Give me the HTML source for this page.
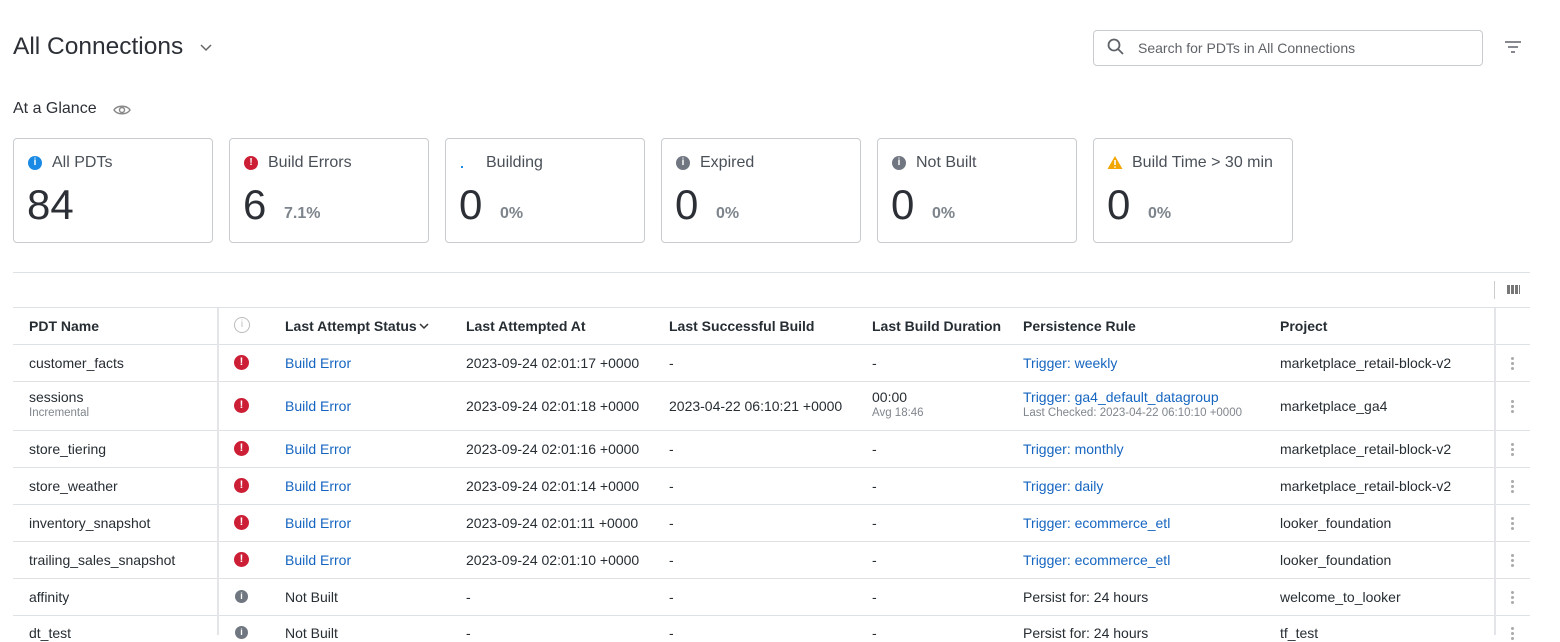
<!DOCTYPE html>
<html><head><style>
body{margin:0;width:1560px;height:635px;overflow:hidden;background:#fff;font-family:"Liberation Sans",Arial,sans-serif;color:#262d33;position:relative}
.a{position:absolute}
.card{position:absolute;top:138px;width:198px;height:103px;border:1px solid #c8ccd0;border-radius:4px}
.card .t{position:absolute;left:38px;top:15px;font-size:16px;color:#4a5058}
.card .ic{position:absolute;left:14px;top:17px;width:14px;height:14px;border-radius:50%;color:#fff;font-size:10px;font-weight:bold;text-align:center;line-height:14px}
.card .n{position:absolute;left:13px;top:42px;font-size:42px;color:#2c3036}
.card .p{position:absolute;left:54px;top:66px;font-size:16px;font-weight:bold;color:#7d848c}
.hl{position:absolute;left:13px;width:1517px;height:1px;background:#dfe2e5}
.c{position:absolute;font-size:14px;white-space:nowrap}
.h{font-weight:bold;color:#262d33}
.lk{color:#1565c0}
.sub{font-size:11.5px;color:#80868d}
.err{position:absolute;left:234px;width:15px;height:15px;border-radius:50%;background:#cc1f36;color:#fff;font-size:11px;font-weight:bold;text-align:center;line-height:15px}
.gi{position:absolute;left:235px;width:13px;height:13px;border-radius:50%;background:#707780;color:#fff;font-size:9px;font-weight:bold;text-align:center;line-height:13px}
.dots{position:absolute;left:1511px;width:3px;font-size:0}
.dots i{display:block;width:3px;height:3px;border-radius:50%;background:#aaa;margin-bottom:2px}
</style></head><body>
<div class="a" style="left:13px;top:33px;font-size:24.5px;color:#2c3036">All Connections</div>
<svg class="a" style="left:200px;top:44px" width="12" height="8"><path d="M1 1l5 5 5-5" stroke="#666" stroke-width="1.5" fill="none"/></svg>
<div class="a" style="left:1093px;top:30px;width:388px;height:34px;border:1px solid #c8ccd0;border-radius:4px"></div>
<svg class="a" style="left:1107px;top:38px" width="18" height="18"><circle cx="7" cy="7" r="5.5" stroke="#5f6368" stroke-width="1.8" fill="none"/><path d="M11 11l5 5" stroke="#5f6368" stroke-width="1.8"/></svg>
<div class="a" style="left:1138px;top:40px;font-size:14px;color:#5f6368">Search for PDTs in All Connections</div>
<svg class="a" style="left:1505px;top:41px" width="16" height="12"><path d="M0 1h16M3 6h10M6 11h4" stroke="#5f6368" stroke-width="1.6"/></svg>
<div class="a" style="left:13px;top:100px;font-size:16px;color:#2c3036">At a Glance</div>
<svg class="a" style="left:113px;top:103px" width="18" height="14"><path d="M1 7C4 2 14 2 17 7 14 12 4 12 1 7z" stroke="#888" stroke-width="1.4" fill="none"/><circle cx="9" cy="7" r="2.5" stroke="#888" stroke-width="1.4" fill="none"/></svg>

<div class="card" style="left:13px"><div class="ic" style="background:#1a8ae5">i</div><div class="t">All PDTs</div><div class="n">84</div></div>
<div class="card" style="left:229px"><div class="ic" style="background:#cc1f36">!</div><div class="t">Build Errors</div><div class="n">6</div><div class="p">7.1%</div></div>
<div class="card" style="left:445px"><div class="a" style="left:15px;top:27px;width:2px;height:2px;background:#1a8ae5"></div><div class="t" style="left:40px">Building</div><div class="n">0</div><div class="p">0%</div></div>
<div class="card" style="left:661px"><div class="ic" style="background:#707780">i</div><div class="t">Expired</div><div class="n">0</div><div class="p">0%</div></div>
<div class="card" style="left:877px"><div class="ic" style="background:#707780">i</div><div class="t">Not Built</div><div class="n">0</div><div class="p">0%</div></div>
<div class="card" style="left:1093px"><svg class="a" style="left:13px;top:16px" width="16" height="15"><path d="M8 1L15.5 14H.5z" fill="#f2a600"/><path d="M8 5v5M8 11.5v1.2" stroke="#fff" stroke-width="1.6"/></svg><div class="t">Build Time &gt; 30 min</div><div class="n">0</div><div class="p">0%</div></div>

<div class="hl" style="top:272px"></div>
<div class="a" style="left:1494px;top:281px;width:1px;height:18px;background:#ccc"></div>
<div class="a" style="left:1507px;top:285px;width:13px;height:9px;background:repeating-linear-gradient(90deg,#777 0 3px,#fff 3px 4px)"></div>
<div class="hl" style="top:307px"></div>
<div class="hl" style="top:344px"></div>
<div class="hl" style="top:381px"></div>
<div class="hl" style="top:430px"></div>
<div class="hl" style="top:467px"></div>
<div class="hl" style="top:504px"></div>
<div class="hl" style="top:541px"></div>
<div class="hl" style="top:578px"></div>
<div class="hl" style="top:615px"></div>
<div class="a" style="left:217px;top:308px;width:2px;height:327px;background:#e3e5e8"></div>
<div class="a" style="left:1494px;top:308px;width:2px;height:327px;background:#e3e5e8"></div>

<div class="c h" style="left:29px;top:318px">PDT Name</div>
<div class="a" style="left:234px;top:317px;width:14px;height:14px;border:1px solid #bbb;border-radius:50%;color:#bbb;font-size:10px;text-align:center;line-height:14px">i</div>
<div class="c h" style="left:285px;top:318px">Last Attempt Status</div>
<svg class="a" style="left:419px;top:323px" width="10" height="7"><path d="M1 1l4 4 4-4" stroke="#333" stroke-width="1.5" fill="none"/></svg>
<div class="c h" style="left:466px;top:318px">Last Attempted At</div>
<div class="c h" style="left:669px;top:318px">Last Successful Build</div>
<div class="c h" style="left:872px;top:318px">Last Build Duration</div>
<div class="c h" style="left:1023px;top:318px">Persistence Rule</div>
<div class="c h" style="left:1280px;top:318px">Project</div>

<div class="c" style="left:29px;top:355px">customer_facts</div><div class="err" style="top:355px">!</div>
<div class="c lk" style="left:285px;top:355px">Build Error</div><div class="c" style="left:466px;top:355px">2023-09-24 02:01:17 +0000</div>
<div class="c" style="left:669px;top:355px">-</div><div class="c" style="left:872px;top:355px">-</div>
<div class="c lk" style="left:1023px;top:355px">Trigger: weekly</div><div class="c" style="left:1280px;top:355px">marketplace_retail-block-v2</div>
<div class="dots" style="top:357px"><i></i><i></i><i></i></div>

<div class="c" style="left:29px;top:389px">sessions</div><div class="c sub" style="left:29px;top:407px">Incremental</div><div class="err" style="top:398px">!</div>
<div class="c lk" style="left:285px;top:398px">Build Error</div><div class="c" style="left:466px;top:398px">2023-09-24 02:01:18 +0000</div>
<div class="c" style="left:669px;top:398px">2023-04-22 06:10:21 +0000</div>
<div class="c" style="left:872px;top:389px">00:00</div><div class="c sub" style="left:872px;top:407px">Avg 18:46</div>
<div class="c lk" style="left:1023px;top:389px">Trigger: ga4_default_datagroup</div><div class="c sub" style="left:1023px;top:407px">Last Checked: 2023-04-22 06:10:10 +0000</div>
<div class="c" style="left:1280px;top:398px">marketplace_ga4</div>
<div class="dots" style="top:400px"><i></i><i></i><i></i></div>

<div class="c" style="left:29px;top:441px">store_tiering</div><div class="err" style="top:441px">!</div>
<div class="c lk" style="left:285px;top:441px">Build Error</div><div class="c" style="left:466px;top:441px">2023-09-24 02:01:16 +0000</div>
<div class="c" style="left:669px;top:441px">-</div><div class="c" style="left:872px;top:441px">-</div>
<div class="c lk" style="left:1023px;top:441px">Trigger: monthly</div><div class="c" style="left:1280px;top:441px">marketplace_retail-block-v2</div>
<div class="dots" style="top:443px"><i></i><i></i><i></i></div>

<div class="c" style="left:29px;top:478px">store_weather</div><div class="err" style="top:478px">!</div>
<div class="c lk" style="left:285px;top:478px">Build Error</div><div class="c" style="left:466px;top:478px">2023-09-24 02:01:14 +0000</div>
<div class="c" style="left:669px;top:478px">-</div><div class="c" style="left:872px;top:478px">-</div>
<div class="c lk" style="left:1023px;top:478px">Trigger: daily</div><div class="c" style="left:1280px;top:478px">marketplace_retail-block-v2</div>
<div class="dots" style="top:480px"><i></i><i></i><i></i></div>

<div class="c" style="left:29px;top:515px">inventory_snapshot</div><div class="err" style="top:515px">!</div>
<div class="c lk" style="left:285px;top:515px">Build Error</div><div class="c" style="left:466px;top:515px">2023-09-24 02:01:11 +0000</div>
<div class="c" style="left:669px;top:515px">-</div><div class="c" style="left:872px;top:515px">-</div>
<div class="c lk" style="left:1023px;top:515px">Trigger: ecommerce_etl</div><div class="c" style="left:1280px;top:515px">looker_foundation</div>
<div class="dots" style="top:517px"><i></i><i></i><i></i></div>

<div class="c" style="left:29px;top:552px">trailing_sales_snapshot</div><div class="err" style="top:552px">!</div>
<div class="c lk" style="left:285px;top:552px">Build Error</div><div class="c" style="left:466px;top:552px">2023-09-24 02:01:10 +0000</div>
<div class="c" style="left:669px;top:552px">-</div><div class="c" style="left:872px;top:552px">-</div>
<div class="c lk" style="left:1023px;top:552px">Trigger: ecommerce_etl</div><div class="c" style="left:1280px;top:552px">looker_foundation</div>
<div class="dots" style="top:554px"><i></i><i></i><i></i></div>

<div class="c" style="left:29px;top:589px">affinity</div><div class="gi" style="top:590px">i</div>
<div class="c" style="left:285px;top:589px">Not Built</div><div class="c" style="left:466px;top:589px">-</div>
<div class="c" style="left:669px;top:589px">-</div><div class="c" style="left:872px;top:589px">-</div>
<div class="c" style="left:1023px;top:589px">Persist for: 24 hours</div><div class="c" style="left:1280px;top:589px">welcome_to_looker</div>
<div class="dots" style="top:591px"><i></i><i></i><i></i></div>

<div class="c" style="left:29px;top:625px">dt_test</div><div class="gi" style="top:626px">i</div>
<div class="c" style="left:285px;top:625px">Not Built</div><div class="c" style="left:466px;top:625px">-</div>
<div class="c" style="left:669px;top:625px">-</div><div class="c" style="left:872px;top:625px">-</div>
<div class="c" style="left:1023px;top:625px">Persist for: 24 hours</div><div class="c" style="left:1280px;top:625px">tf_test</div>
<div class="dots" style="top:627px"><i></i><i></i><i></i></div>
</body></html>
